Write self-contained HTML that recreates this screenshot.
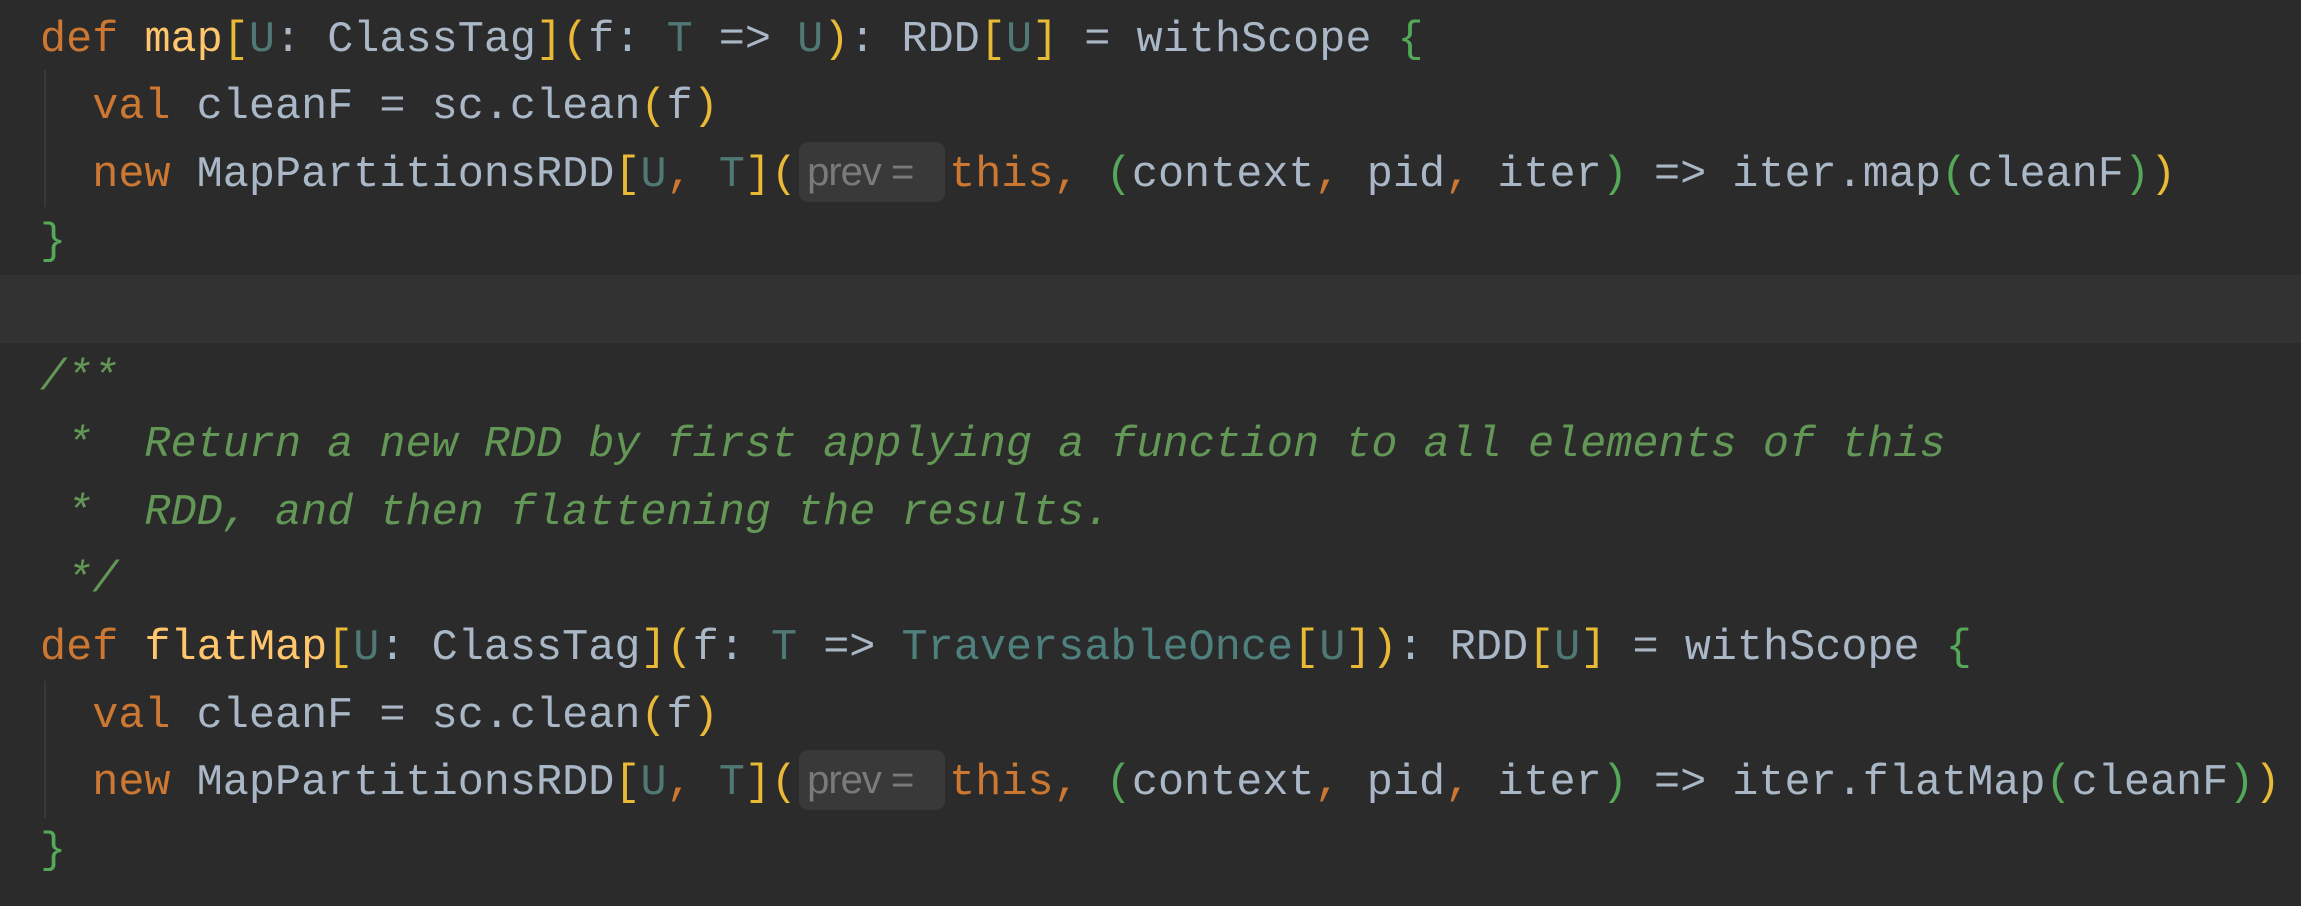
<!DOCTYPE html>
<html><head><meta charset="utf-8"><style>
html,body{margin:0;padding:0;background:#2b2b2b;width:2301px;height:906px;overflow:hidden}
.code{position:absolute;left:40px;top:6.6px;font-family:"Liberation Mono",monospace;font-size:43.5px;line-height:67.6px;color:#a9b7c6;white-space:pre}
.hl{position:absolute;left:0;top:275px;width:2301px;height:68px;background:#323232}
.guide{position:absolute;left:44px;width:2px;background:#353a35}
.k{color:#cc7832}.f{color:#ffc66d}.t{color:#507874}.y{color:#e8ba36}.g{color:#54a857}
.c{color:#629755;font-style:italic}.tr{color:#4e807d}
.inl{display:inline-block;box-sizing:border-box;width:146px;padding-left:8px;text-align:left;font-family:"Liberation Sans",sans-serif;font-size:40px;color:#7a7a7a;background:#393939;border-radius:9px;line-height:60px;height:60px;margin:0 4px 0 2px;vertical-align:1px;letter-spacing:-1px}
</style></head><body>
<div class="hl"></div>
<div class="guide" style="top:70px;height:137px"></div>
<div class="guide" style="top:681px;height:137px"></div>
<div class="code"><span class="k">def</span> <span class="f">map</span><span class="y">[</span><span class="t">U</span>: ClassTag<span class="y">](</span>f: <span class="t">T</span> =&gt; <span class="t">U</span><span class="y">)</span>: RDD<span class="y">[</span><span class="t">U</span><span class="y">]</span> = withScope <span class="g">{</span>
  <span class="k">val</span> cleanF = sc.clean<span class="y">(</span>f<span class="y">)</span>
  <span class="k">new</span> MapPartitionsRDD<span class="y">[</span><span class="t">U</span><span class="k">,</span> <span class="t">T</span><span class="y">](</span><span class="inl">prev =</span><span class="k">this,</span> <span class="g">(</span>context<span class="k">,</span> pid<span class="k">,</span> iter<span class="g">)</span> =&gt; iter.map<span class="g">(</span>cleanF<span class="g">)</span><span class="y">)</span>
<span class="g">}</span>

<span class="c">/**</span>
<span class="c"> *  Return a new RDD by first applying a function to all elements of this</span>
<span class="c"> *  RDD, and then flattening the results.</span>
<span class="c"> */</span>
<span class="k">def</span> <span class="f">flatMap</span><span class="y">[</span><span class="t">U</span>: ClassTag<span class="y">](</span>f: <span class="t">T</span> =&gt; <span class="tr">TraversableOnce</span><span class="y">[</span><span class="t">U</span><span class="y">])</span>: RDD<span class="y">[</span><span class="t">U</span><span class="y">]</span> = withScope <span class="g">{</span>
  <span class="k">val</span> cleanF = sc.clean<span class="y">(</span>f<span class="y">)</span>
  <span class="k">new</span> MapPartitionsRDD<span class="y">[</span><span class="t">U</span><span class="k">,</span> <span class="t">T</span><span class="y">](</span><span class="inl">prev =</span><span class="k">this,</span> <span class="g">(</span>context<span class="k">,</span> pid<span class="k">,</span> iter<span class="g">)</span> =&gt; iter.flatMap<span class="g">(</span>cleanF<span class="g">)</span><span class="y">)</span>
<span class="g">}</span></div>
</body></html>
